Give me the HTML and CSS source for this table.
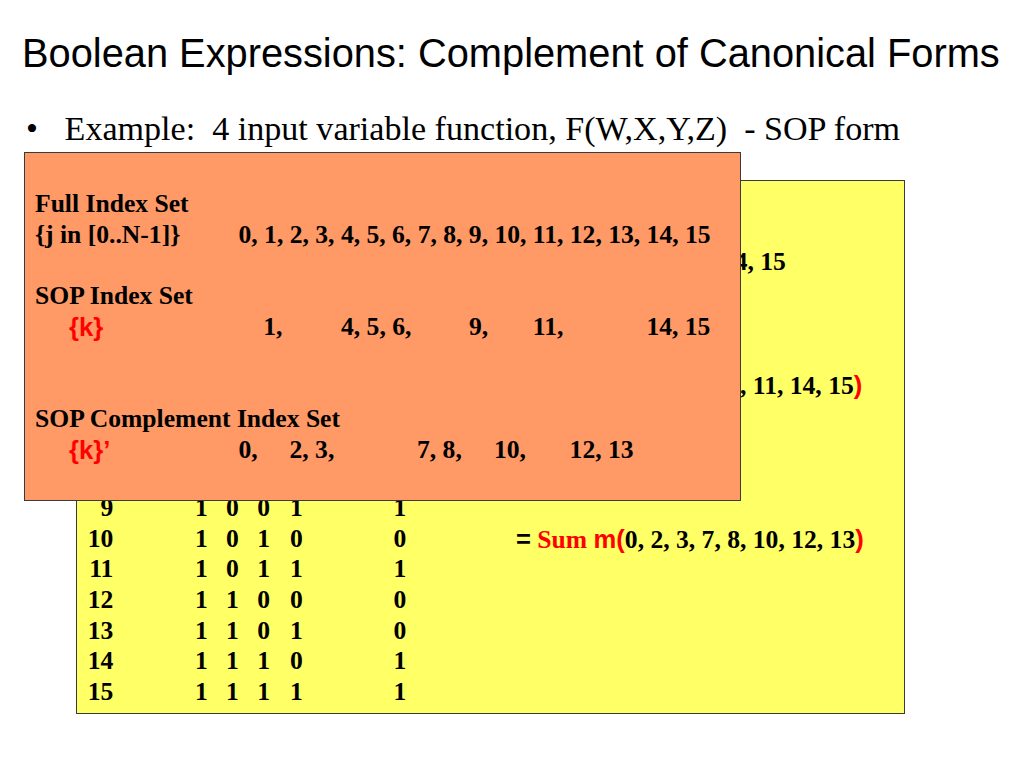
FILE: index.html
```html
<!DOCTYPE html>
<html lang="en">
<head>
<meta charset="utf-8">
<title>Boolean Expressions: Complement of Canonical Forms</title>
<link rel="stylesheet" href="styles.css">
</head>
<body>
<div class="slide">
  <h1 class="title">Boolean Expressions: Complement of Canonical Forms</h1>
  <ul class="points">
    <li><span class="dot">•</span><span class="pt">Example:  4 input variable function, F(W,X,Y,Z)  - SOP form</span></li>
  </ul>

  <div class="truth">
    <div class="trow head"><span class="hidx">Index</span><span>W</span><span>X</span><span>Y</span><span>Z</span><span>F</span><span></span></div>
    <div class="trow"><span class="idx">0</span><span>0</span><span>0</span><span>0</span><span>0</span><span>0</span><span></span></div>
    <div class="trow"><span class="idx">1</span><span>0</span><span>0</span><span>0</span><span>1</span><span>1</span><span class="rt shift">1, 4, 5, 6, 9, 11, 14, 15</span></div>
    <div class="trow"><span class="idx">2</span><span>0</span><span>0</span><span>1</span><span>0</span><span>0</span><span></span></div>
    <div class="trow"><span class="idx">3</span><span>0</span><span>0</span><span>1</span><span>1</span><span>0</span><span></span></div>
    <div class="trow"><span class="idx">4</span><span>0</span><span>1</span><span>0</span><span>0</span><span>1</span><span class="rt">F</span></div>
    <div class="trow"><span class="idx">5</span><span>0</span><span>1</span><span>0</span><span>1</span><span>1</span><span class="rt"><span class="sans">=</span> <span class="red">Sum</span> <span class="red sans">m(</span>1, 4, 5, 6, 9, 11, 14, 15<span class="red sans">)</span></span></div>
    <div class="trow"><span class="idx">6</span><span>0</span><span>1</span><span>1</span><span>0</span><span>1</span><span></span></div>
    <div class="trow"><span class="idx">7</span><span>0</span><span>1</span><span>1</span><span>1</span><span>0</span><span></span></div>
    <div class="trow"><span class="idx">8</span><span>1</span><span>0</span><span>0</span><span>0</span><span>0</span><span></span></div>
    <div class="trow"><span class="idx">9</span><span>1</span><span>0</span><span>0</span><span>1</span><span>1</span><span></span></div>
    <div class="trow"><span class="idx">10</span><span>1</span><span>0</span><span>1</span><span>0</span><span>0</span><span class="rt"><span class="sans">=</span> <span class="red">Sum</span> <span class="red sans">m(</span>0, 2, 3, 7, 8, 10, 12, 13<span class="red sans">)</span></span></div>
    <div class="trow"><span class="idx">11</span><span>1</span><span>0</span><span>1</span><span>1</span><span>1</span><span></span></div>
    <div class="trow"><span class="idx">12</span><span>1</span><span>1</span><span>0</span><span>0</span><span>0</span><span></span></div>
    <div class="trow"><span class="idx">13</span><span>1</span><span>1</span><span>0</span><span>1</span><span>0</span><span></span></div>
    <div class="trow"><span class="idx">14</span><span>1</span><span>1</span><span>1</span><span>0</span><span>1</span><span></span></div>
    <div class="trow"><span class="idx">15</span><span>1</span><span>1</span><span>1</span><span>1</span><span>1</span><span></span></div>
  </div>

  <div class="sets">
    <div class="line"></div>
    <div class="line">Full Index Set</div>
    <div class="line full"><span>{j in [0..N-1]}</span><span>0, 1, 2, 3, 4, 5, 6, 7, 8, 9, 10, 11, 12, 13, 14, 15</span></div>
    <div class="line"></div>
    <div class="line">SOP Index Set</div>
    <div class="line kset"><span class="klabel red sans">{k}</span><span>1,</span><span>4, 5, 6,</span><span>9,</span><span>11,</span><span>14, 15</span></div>
    <div class="line"></div>
    <div class="line"></div>
    <div class="line">SOP Complement Index Set</div>
    <div class="line kcomp"><span class="klabel red sans">{k}’</span><span>0,</span><span>2, 3,</span><span>7, 8,</span><span>10,</span><span>12, 13</span></div>
  </div>
</div>
</body>
</html>
```

FILE: styles.css
```css
html, body {
  margin: 0;
  padding: 0;
  background: #ffffff;
}

.slide {
  position: relative;
  width: 1024px;
  height: 768px;
  overflow: hidden;
  background: #ffffff;
  color: #000000;
}

.title {
  margin: 0;
  padding: 30px 0 0 22px;
  font-family: "Liberation Sans", Arial, sans-serif;
  font-size: 39.8px;
  line-height: 46px;
  font-weight: normal;
  white-space: nowrap;
}

.points {
  list-style: none;
  margin: 33px 0 0 0;
  padding: 0 0 0 26px;
  font-family: "Liberation Serif", "Times New Roman", serif;
  font-size: 34.1px;
  line-height: 40px;
}

.points li {
  display: flex;
}

.dot {
  width: 38.6px;
  flex: none;
}

.pt {
  white-space: pre;
}

/* yellow truth table box */
.truth {
  box-sizing: border-box;
  width: 829px;
  height: 534px;
  margin: 31px 0 0 76px;
  padding: 5px 0 0 0;
  border: 1px solid #3a3a3a;
  background: #ffff66;
  font-family: "Liberation Serif", "Times New Roman", serif;
  font-weight: bold;
  font-size: 25.6px;
  line-height: 30.7px;
}

.trow {
  display: grid;
  grid-template-columns: 118px 31px 31.2px 32.8px 103.5px 122.5px auto;
  height: 30.7px;
  white-space: nowrap;
}

.idx {
  width: 36.4px;
  text-align: right;
}

.hidx {
  padding-left: 6px;
}

.rt {
  white-space: pre;
}

.shift {
  margin-left: 41px;
}

.red {
  color: #ff0000;
}

.sans {
  font-family: "Liberation Sans", Arial, sans-serif;
}

/* orange index-set overlay box */
.sets {
  position: absolute;
  left: 24px;
  top: 152px;
  box-sizing: border-box;
  width: 717px;
  height: 349px;
  padding: 5.6px 0 0 10px;
  border: 1px solid #3a3a3a;
  background: #ff9966;
  font-family: "Liberation Serif", "Times New Roman", serif;
  font-weight: bold;
  font-size: 25.6px;
  line-height: 30.7px;
  white-space: nowrap;
}

.line {
  height: 30.7px;
}

.full {
  display: grid;
  grid-template-columns: 203.5px auto;
}

.kset {
  display: grid;
  grid-template-columns: 228.2px 77.8px 128px 63.8px 113.6px auto;
}

.kcomp {
  display: grid;
  grid-template-columns: 203.5px 51px 127.5px 76.9px 75.7px auto;
}

.klabel {
  padding-left: 34px;
}
```
